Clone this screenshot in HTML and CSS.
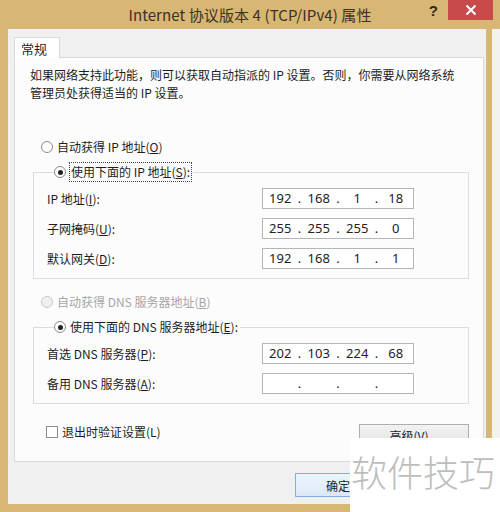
FILE: index.html
```html
<!DOCTYPE html>
<html lang="zh-CN">
<head>
    <meta charset="UTF-8">
    <title>Internet 协议版本 4 (TCP/IPv4) 属性</title>
    <link rel="stylesheet" href="styles.css">
</head>
<body>
    <div class="window">
        <div class="titlebar">
            <div></div>
            <div class="title">Internet 协议版本 4 (TCP/IPv4) 属性</div>
            <div class="caption-buttons">
                <span class="help">?</span>
                <span class="close">
                    <svg width="12" height="12" viewBox="0 0 12 12"><path d="M1.5 1.5 L10.5 10.5 M10.5 1.5 L1.5 10.5" stroke="#fff" stroke-width="2"/></svg>
                </span>
            </div>
        </div>

        <div class="main">
            <div class="frame">
                <div class="tabs">
                    <div class="tab">常规</div>
                </div>
                <div class="panel">
                    <p class="desc">如果网络支持此功能，则可以获取自动指派的 IP 设置。否则，你需要从网络系统<br>管理员处获得适当的 IP 设置。</p>

                    <div class="option first">
                        <span class="radio"></span>
                        <span>自动获得 IP 地址(<u>O</u>)</span>
                    </div>

                    <fieldset class="group">
                        <legend class="option">
                            <span class="radio checked"></span>
                            <span class="focus">使用下面的 IP 地址(<u>S</u>):</span>
                        </legend>
                        <div class="row">
                            <label>IP 地址(<u>I</u>):</label>
                            <div class="ipbox"><span>192</span><i>.</i><span>168</span><i>.</i><span>1</span><i>.</i><span>18</span></div>
                        </div>
                        <div class="row">
                            <label>子网掩码(<u>U</u>):</label>
                            <div class="ipbox"><span>255</span><i>.</i><span>255</span><i>.</i><span>255</span><i>.</i><span>0</span></div>
                        </div>
                        <div class="row">
                            <label>默认网关(<u>D</u>):</label>
                            <div class="ipbox"><span>192</span><i>.</i><span>168</span><i>.</i><span>1</span><i>.</i><span>1</span></div>
                        </div>
                    </fieldset>

                    <div class="option second disabled">
                        <span class="radio"></span>
                        <span>自动获得 DNS 服务器地址(<u>B</u>)</span>
                    </div>

                    <fieldset class="group">
                        <legend class="option">
                            <span class="radio checked"></span>
                            <span>使用下面的 DNS 服务器地址(<u>E</u>):</span>
                        </legend>
                        <div class="row">
                            <label>首选 DNS 服务器(<u>P</u>):</label>
                            <div class="ipbox"><span>202</span><i>.</i><span>103</span><i>.</i><span>224</span><i>.</i><span>68</span></div>
                        </div>
                        <div class="row">
                            <label>备用 DNS 服务器(<u>A</u>):</label>
                            <div class="ipbox"><span></span><i>.</i><span></span><i>.</i><span></span><i>.</i><span></span></div>
                        </div>
                    </fieldset>

                    <div class="footer-row">
                        <div class="check-option">
                            <span class="checkbox"></span>
                            <span>退出时验证设置(L)</span>
                        </div>
                        <button class="btn">高级(<u>V</u>)...</button>
                    </div>
                </div>

                <div class="dialog-buttons">
                    <button class="btn default">确定</button>
                    <!-- cancel sits under the stamp, so no label shows -->
                    <button class="btn"></button>
                </div>
            </div>
        </div>

        <div class="watermark">软件技巧</div>
    </div>
</body>
</html>
```

FILE: styles.css
```css
html, body {
    margin: 0;
    padding: 0;
    background: #f4f2ee;
}
body {
    font-family: "Noto Sans CJK SC", "Noto Sans", sans-serif;
    font-size: 12px;
    color: #1e1e1e;
}
.window {
    position: relative;
    width: 500px;
    height: 512px;
    background: #d8b674;
    overflow: hidden;
}

/* title bar */
.titlebar {
    height: 29px;
    display: grid;
    grid-template-columns: 1fr auto 1fr;
    align-items: start;
}
.title {
    font-size: 15px;
    line-height: 29px;
    color: #3a3226;
    letter-spacing: 0.1px;
}
.caption-buttons {
    display: flex;
    justify-content: flex-end;
    padding-right: 7px;
}
.help {
    font-family: "Liberation Sans", sans-serif;
    font-weight: bold;
    font-size: 15px;
    line-height: 22px;
    color: #2f2a22;
    margin-right: 10px;
}
.close {
    width: 45px;
    height: 20px;
    background: #c94a4b;
    display: flex;
    align-items: center;
    justify-content: center;
}

/* window body */
.main {
    border-right: 8px solid #f4f2ee;
    padding: 0 6px 8px 8px;
}
.frame {
    background: #f0f0f0;
    height: 475px;
    padding: 8px 2px 0 6px;
    box-sizing: border-box;
}
.tabs {
    display: flex;
    height: 21px;
}
.tab {
    width: 46px;
    height: 21px;
    box-sizing: border-box;
    background: #fff;
    border: 1px solid #d9d9d9;
    border-bottom: none;
    padding: 0 0 0 6px;
    font-size: 13px;
    line-height: 21px;
    position: relative;
    z-index: 1;
}
.panel {
    background: #fcfcfc;
    border: 1px solid #d9d9d9;
    margin-top: -1px;
    padding: 8px 14px 14px 15px;
}
.desc {
    margin: 0;
    line-height: 18px;
}

/* radio options */
.option {
    display: flex;
    align-items: center;
    gap: 4px;
    line-height: 18px;
}
.option.first {
    margin: 36px 0 0 11px;
}
.option.second {
    margin: 14px 0 0 11px;
}
.option.disabled {
    color: #a6a6a6;
}
.radio {
    width: 12px;
    height: 12px;
    box-sizing: border-box;
    border: 1px solid #8a8a8a;
    border-radius: 50%;
    background: #fff;
    display: flex;
    align-items: center;
    justify-content: center;
}
.radio.checked::after {
    content: "";
    width: 5px;
    height: 5px;
    border-radius: 50%;
    background: #222;
}
.disabled .radio {
    border-color: #c8c8c8;
    background: #f0f0f0;
}
.focus {
    outline: 1px dotted #444;
    outline-offset: 0;
    padding: 0 1px;
}

/* group boxes */
.group {
    margin: 7px 0 0 3px;
    padding: 2px 0 5px 13px;
    border: 1px solid #dcdcdc;
    min-width: 0;
}
.group legend {
    margin-left: 7px;
    padding: 0 2px 0 0;
}
.row {
    display: flex;
    align-items: center;
    height: 30px;
}
.row label {
    width: 215px;
}
.ipbox {
    width: 152px;
    height: 21px;
    box-sizing: border-box;
    border: 1px solid #b5b5b5;
    background: #fff;
    display: grid;
    grid-template-columns: 1fr auto 1fr auto 1fr auto 1fr;
    align-items: center;
    font-family: "Noto Sans", sans-serif;
    font-size: 13px;
    color: #222;
}
.ipbox span {
    text-align: center;
}
.ipbox i {
    font-style: normal;
    width: 4px;
    text-align: center;
}

/* checkbox + advanced */
.footer-row {
    display: flex;
    justify-content: space-between;
    align-items: flex-start;
    margin-top: 19px;
}
.check-option {
    display: flex;
    align-items: center;
    gap: 4px;
    line-height: 18px;
    padding-left: 16px;
}
.checkbox {
    width: 12px;
    height: 12px;
    box-sizing: border-box;
    border: 1px solid #8e8f8f;
    background: #fff;
}
.btn {
    font-family: "Noto Sans CJK SC", "Noto Sans", sans-serif;
    font-size: 12px;
    color: #1e1e1e;
    height: 23px;
    padding: 0;
    border: 1px solid #adadad;
    background: linear-gradient(#f2f2f2, #e3e3e3);
    border-radius: 0;
}
.footer-row .btn {
    width: 110px;
    margin-top: 1px;
}

/* OK / Cancel */
.dialog-buttons {
    display: flex;
    gap: 8px;
    margin: 11px 0 0 281px;
}
.dialog-buttons .btn {
    width: 86px;
    height: 24px;
}
.btn.default {
    border-color: #7fb0df;
    background: linear-gradient(#eef5fb, #dbe9f6);
}

/* overlay stamp */
.watermark {
    position: absolute;
    left: 350px;
    top: 438px;
    width: 150px;
    height: 74px;
    background: #fff;
    color: #bdbdbd;
    font-size: 36px;
    font-weight: 300;
    line-height: 66px;
    padding-left: 1px;
    box-sizing: border-box;
    white-space: nowrap;
}
```
